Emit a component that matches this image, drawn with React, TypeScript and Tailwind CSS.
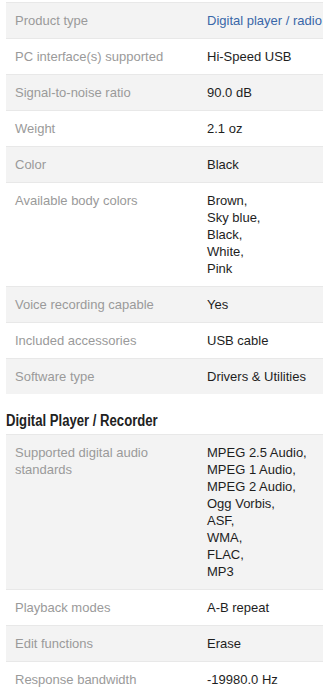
import React from 'react'

type Spec = { label: string; value: string[]; link?: boolean }

const general: Spec[] = [
  { label: 'Product type', value: ['Digital player / radio'], link: true },
  { label: 'PC interface(s) supported', value: ['Hi-Speed USB'] },
  { label: 'Signal-to-noise ratio', value: ['90.0 dB'] },
  { label: 'Weight', value: ['2.1 oz'] },
  { label: 'Color', value: ['Black'] },
  {
    label: 'Available body colors',
    value: ['Brown,', 'Sky blue,', 'Black,', 'White,', 'Pink'],
  },
  { label: 'Voice recording capable', value: ['Yes'] },
  { label: 'Included accessories', value: ['USB cable'] },
  { label: 'Software type', value: ['Drivers & Utilities'] },
]

const player: Spec[] = [
  {
    label: 'Supported digital audio standards',
    value: [
      'MPEG 2.5 Audio,',
      'MPEG 1 Audio,',
      'MPEG 2 Audio,',
      'Ogg Vorbis,',
      'ASF,',
      'WMA,',
      'FLAC,',
      'MP3',
    ],
  },
  { label: 'Playback modes', value: ['A-B repeat'] },
  { label: 'Edit functions', value: ['Erase'] },
  { label: 'Response bandwidth', value: ['-19980.0 Hz'] },
]

function SpecTable({ rows }: { rows: Spec[] }) {
  return (
    <div className="ml-[6px]">
      {rows.map((row, i) => (
        <div
          key={row.label}
          className={`flex border-t border-[#e8e8e8] py-[9px] text-[13px] leading-[17px] ${
            i % 2 === 0 ? 'bg-[#f3f3f3]' : 'bg-white'
          }`}
        >
          <div className="w-[201px] shrink-0 pl-[9px] pr-[12px] text-[#9a9a9a]">
            {row.label}
          </div>
          <div
            className={`whitespace-nowrap ${
              row.link ? 'text-[#3a67a8]' : 'text-[#1e1e1e]'
            }`}
          >
            {row.value.map((v) => (
              <div key={v}>{v}</div>
            ))}
          </div>
        </div>
      ))}
    </div>
  )
}

export default function App() {
  return (
    <div
      className="h-[690px] w-[323px] overflow-hidden bg-white pt-[2px]"
      style={{ fontFamily: '"Liberation Sans", Arial, sans-serif' }}
    >
      <SpecTable rows={general} />
      {/* section heading uses a narrow bold face */}
      <h3 className="ml-[6px] mt-[17px] pb-[3px] text-[16px] font-bold leading-[20px] text-[#222]">
        <span className="inline-block origin-left scale-x-[0.82] whitespace-nowrap">
          Digital Player / Recorder
        </span>
      </h3>
      <SpecTable rows={player} />
    </div>
  )
}
